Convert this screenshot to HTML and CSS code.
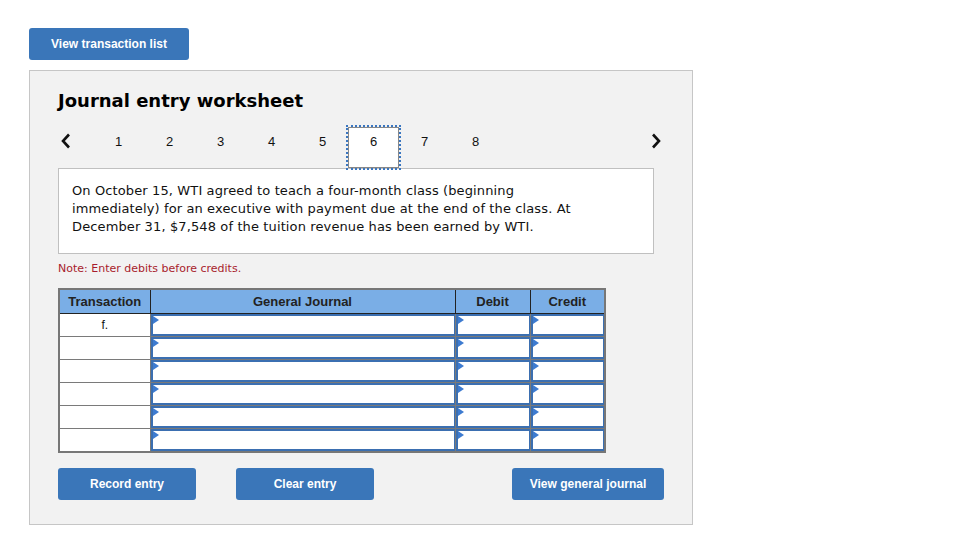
FILE: index.html
```html
<!DOCTYPE html>
<html>
<head>
<meta charset="utf-8">
<link rel="stylesheet" href="styles.css">
</head>
<body>
<div class="page">
  <button class="btn btn-top">View transaction list</button>
  <div class="panel">
    <h1 class="title">Journal entry worksheet</h1>
    <div class="nav">
      <span class="arrow arrow-left"><svg width="12" height="16" viewBox="0 0 12 16"><path d="M9 1.5 L3 8 L9 14.5" fill="none" stroke="#111" stroke-width="2.6"/></svg></span>
      <div class="steps">
        <span class="step">1</span>
        <span class="step">2</span>
        <span class="step">3</span>
        <span class="step">4</span>
        <span class="step">5</span>
        <span class="step active">6</span>
        <span class="step">7</span>
        <span class="step">8</span>
      </div>
      <span class="arrow arrow-right"><svg width="12" height="16" viewBox="0 0 12 16"><path d="M3 1.5 L9 8 L3 14.5" fill="none" stroke="#111" stroke-width="2.6"/></svg></span>
    </div>
    <div class="question">On October 15, WTI agreed to teach a four-month class (beginning immediately) for an executive with payment due at the end of the class. At December 31, $7,548 of the tuition revenue has been earned by WTI.</div>
    <p class="note">Note: Enter debits before credits.</p>
    <table class="journal">
      <thead>
        <tr>
          <th class="c-tr">Transaction</th>
          <th class="c-gj">General Journal</th>
          <th class="c-dr">Debit</th>
          <th class="c-cr">Credit</th>
        </tr>
      </thead>
      <tbody>
        <tr><td class="tr">f.</td><td><div class="inp"></div></td><td><div class="inp"></div></td><td><div class="inp"></div></td></tr>
        <tr><td class="tr"></td><td><div class="inp"></div></td><td><div class="inp"></div></td><td><div class="inp"></div></td></tr>
        <tr><td class="tr"></td><td><div class="inp"></div></td><td><div class="inp"></div></td><td><div class="inp"></div></td></tr>
        <tr><td class="tr"></td><td><div class="inp"></div></td><td><div class="inp"></div></td><td><div class="inp"></div></td></tr>
        <tr><td class="tr"></td><td><div class="inp"></div></td><td><div class="inp"></div></td><td><div class="inp"></div></td></tr>
        <tr><td class="tr"></td><td><div class="inp"></div></td><td><div class="inp"></div></td><td><div class="inp"></div></td></tr>
      </tbody>
    </table>
    <div class="actions">
      <button class="btn btn-act btn-record">Record entry</button>
      <button class="btn btn-act btn-clear">Clear entry</button>
      <button class="btn btn-act btn-view">View general journal</button>
    </div>
  </div>
</div>
</body>
</html>
```

FILE: styles.css
```css
* { box-sizing: border-box; }
html, body { margin: 0; padding: 0; background: #fff; }
body { font-family: "Liberation Sans", Arial, sans-serif; color: #111; }
.page { padding: 28px 0 0 29px; }

.btn {
  display: block;
  border: none;
  border-radius: 3px;
  background: #3a76b9;
  color: #fff;
  font-family: "Liberation Sans", Arial, sans-serif;
  font-weight: bold;
  font-size: 12px;
  padding: 0;
  cursor: pointer;
}
.btn-top { width: 160px; height: 32px; }

.panel {
  margin-top: 10px;
  width: 664px;
  height: 455px;
  background: #f2f2f2;
  border: 1px solid #c6c6c6;
  padding: 20px 0 0 28px;
}

.title {
  margin: 0;
  font-family: "DejaVu Sans", Verdana, sans-serif;
  font-weight: bold;
  font-size: 18px;
  line-height: 20px;
  color: #000;
}

.nav {
  display: flex;
  align-items: flex-start;
  margin-top: 16px;
  height: 41px;
  width: 604px;
}
.arrow { display: flex; align-items: center; width: 12px; height: 16px; margin-top: 6px; }
.arrow-left { margin-left: 2px; }
.steps { display: flex; margin-left: 21px; }
.step {
  width: 51px;
  height: 41px;
  display: flex;
  justify-content: center;
  padding-top: 7px;
  font-size: 13px;
  line-height: 15px;
  color: #111;
}
.step.active {
  background: #fff;
  border: 1px solid #888;
  outline: 2px dotted #3a76c0;
  padding-top: 6px;
}
.arrow-right { margin-left: auto; margin-right: 0; }

.question {
  width: 596px;
  height: 86px;
  margin-top: 0;
  background: #fff;
  border: 1px solid #c0c0c0;
  padding: 13px 80px 0 13px;
  font-family: "DejaVu Sans", Verdana, sans-serif;
  font-size: 13px;
  letter-spacing: 0.12px;
  line-height: 18px;
  color: #111;
}

.note {
  margin: 8px 0 0 0;
  font-family: "DejaVu Sans", Verdana, sans-serif;
  font-size: 11px;
  line-height: 14px;
  color: #a81c2c;
}

.journal {
  margin-top: 12px;
  border-collapse: collapse;
  border: 2px solid #777;
  table-layout: fixed;
  width: 546px;
}
.journal th {
  background: #7aaee6;
  border: 1px solid #222;
  height: 24px;
  padding: 0;
  font-size: 13px;
  font-weight: bold;
  color: #222;
  text-align: center;
}
.c-tr { width: 91px; }
.c-gj { width: 305px; }
.c-dr { width: 75px; }
.c-cr { width: 75px; }
.journal td {
  border: 1px solid #7a7a7a;
  background: #fff;
  height: 23px;
  padding: 0;
  vertical-align: top;
}
.journal td.tr {
  text-align: center;
  font-size: 12px;
  line-height: 18px;
  padding-top: 2px;
  color: #111;
}
.inp {
  height: 22px;
  border: 2px solid #3b6fb1;
  border-right-width: 1px;
  position: relative;
  background: #fff;
}
.inp::before {
  content: "";
  position: absolute;
  left: 0;
  top: 0;
  border-top: 4px solid transparent;
  border-bottom: 4px solid transparent;
  border-left: 6px solid #3d7bd0;
}

.actions {
  display: flex;
  margin-top: 15px;
  width: 606px;
}
.btn-act { height: 32px; }
.btn-record { width: 138px; }
.btn-clear { width: 138px; margin-left: 40px; }
.btn-view { width: 152px; margin-left: auto; }
```
